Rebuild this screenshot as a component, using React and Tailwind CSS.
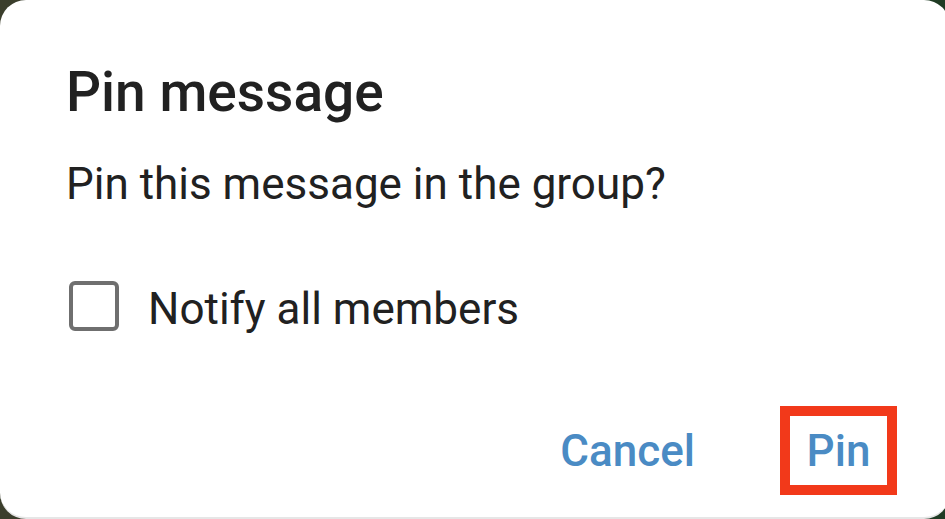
export default function App() {
  return (
    <div className="w-[945px] h-[519px] overflow-hidden bg-gradient-to-r from-[#3b3e2c] to-[#1f3b24]" style={{ fontFamily: 'Roboto, "Noto Sans", sans-serif' }}>
      <div className="w-[950px] h-[519px] rounded-[26px] bg-white border-b-2 border-[#e6e6e6] flex flex-col pl-[66px] pr-[53px]">
        <h1 className="pt-[65px] text-[55px] leading-none font-medium text-[#212121]">Pin message</h1>
        <p className="mt-[42px] text-[44px] leading-none text-[#212121]">Pin this message in the group?</p>
        <div className="mt-[75px] flex items-center">
          <div className="ml-[3px] w-[50px] h-[50px] rounded-[6px] border-[4px] border-[#6f6f6f]" />
          <span className="ml-[29px] mt-[6px] text-[44px] leading-none text-[#212121]">Notify all members</span>
        </div>
        <div className="mt-auto mb-[22px] flex items-center justify-end">
          <span className="text-[44px] leading-none font-medium text-[#4a8bc4]">Cancel</span>
          <div className="ml-[85px] w-[117px] h-[89px] border-[10px] border-[#f2391a] flex items-center justify-center">
            <span className="text-[44px] leading-none font-medium text-[#4a8bc4]">Pin</span>
          </div>
        </div>
      </div>
    </div>
  );
}
